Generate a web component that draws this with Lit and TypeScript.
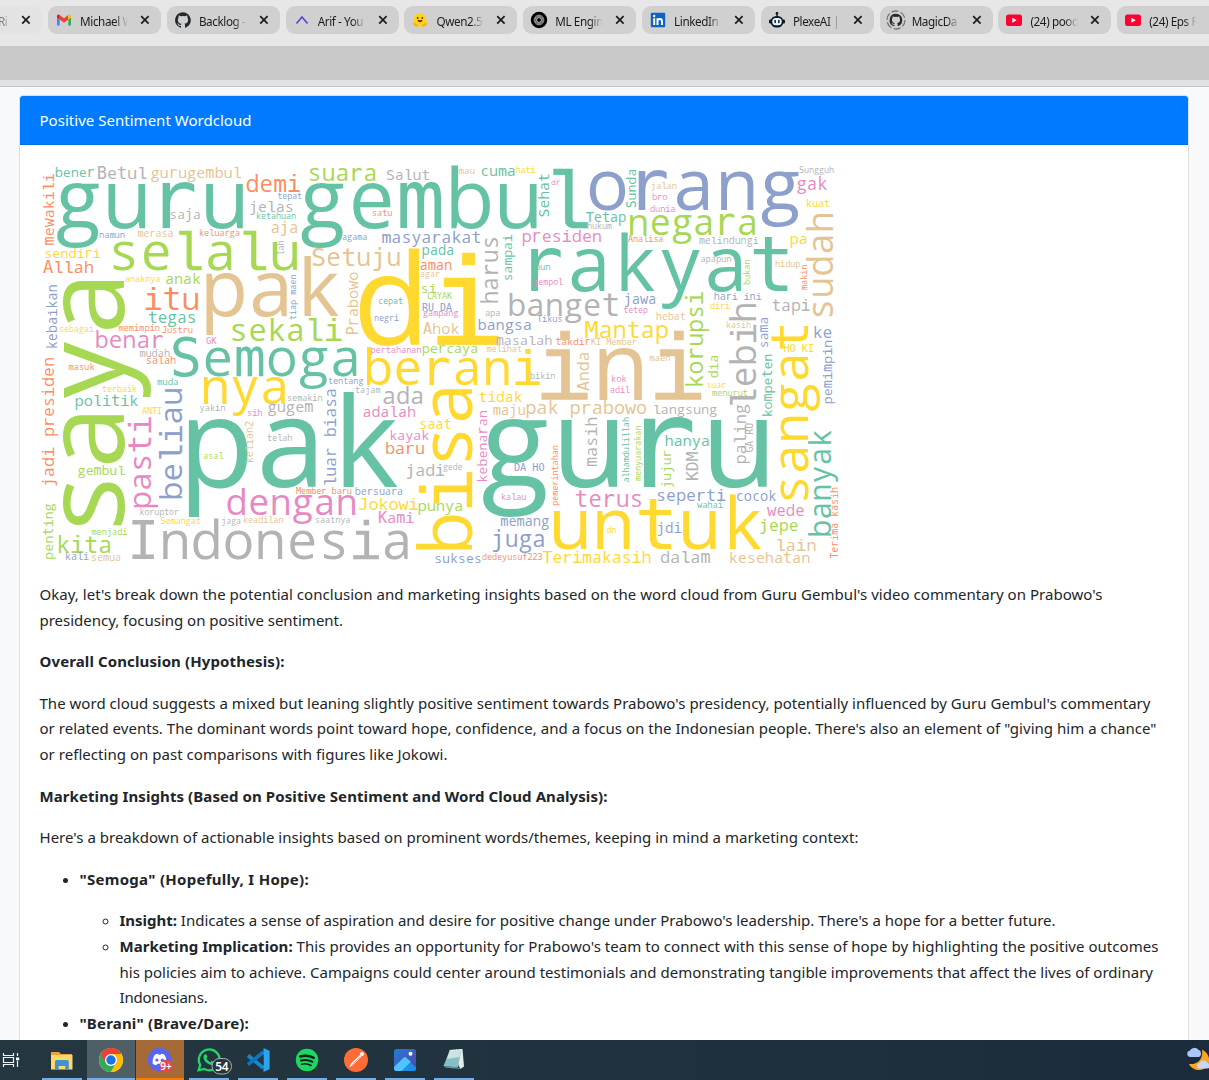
import { LitElement, html, svg, css } from "lit";
import { customElement } from "lit/decorators.js";

const T = "#66c2a5", O = "#fc8d62", B = "#8da0cb", P = "#e78ac3";
const G = "#a6d854", Y = "#ffd92f", N = "#e5c494", A = "#b3b3b3";

// text, start, end, baseline, colour. Upright words run left to right.
type Word = [string, number, number, number, string];

const across: Word[] = [
  ["bener", 55.5, 94, 177, T], ["Betul", 97.7, 146.5, 179, A], ["gurugembul", 151.5, 241, 177.7, N],
  ["guru gembul", 58.5, 587, 227.7, T], ["saja", 170, 200, 219, A], ["namun", 99.5, 124.5, 237.5, B],
  ["merasa", 138, 173, 237.3, N], ["keluarga", 199.5, 239.5, 236, O], ["sendiri", 45, 100, 258, Y],
  ["Allah", 44, 93, 273, O], ["selalu", 111, 298, 270, G], ["anaknya", 125.5, 160, 282, Y],
  ["anak", 166, 200, 284, G], ["itu", 145.5, 198.5, 309.5, O], ["pak", 205, 337.5, 315.7, N],
  ["tegas", 149, 195.5, 322.5, T], ["sebagai", 59.5, 93.5, 331.5, Y], ["memimpin", 119, 159.5, 331, O],
  ["Justru", 162.5, 192.5, 332.5, O], ["benar", 96, 163, 347.5, P], ["GK", 206.5, 216, 343.5, P],
  ["mudah", 140, 169.5, 357, A], ["salah", 146.5, 175.5, 364, O], ["Semoga", 173, 358.5, 375.7, T],
  ["demi", 247, 299.5, 191.5, O], ["tepat", 278, 301.5, 198.5, B], ["suara", 309, 376, 181, G],
  ["Salut", 387, 429.5, 180, A], ["jelas", 250, 293, 212, A], ["ketahuan", 256.5, 295.5, 218.5, T],
  ["satu", 372.5, 392, 215.5, O], ["aja", 271.5, 297.5, 233, N], ["agama", 342.5, 367, 239.7, B],
  ["masyarakat", 382.5, 480.5, 243, B], ["Setuju", 312.5, 400, 265.5, N], ["pada", 422.5, 453.5, 254.7, T],
  ["aman", 420.5, 451.5, 270, O], ["agar", 420.5, 439.5, 276.5, N], ["si", 421.5, 436, 293, G],
  ["LAYAK", 427.5, 451.5, 298.5, G], ["RU DA", 422.5, 451.5, 311, B], ["gampang", 423.5, 458, 316, P],
  ["Ahok", 424, 458.5, 333.5, N], ["di", 361, 497, 344.5, Y], ["cepat", 378.5, 402.5, 303.7, T],
  ["negri", 374.5, 398.5, 320.5, B], ["sekali", 231, 341, 341, G], ["pertahanan", 371, 421, 352.7, P],
  ["percaya", 422.5, 477.5, 353, G], ["berani", 366, 539, 384.5, Y], ["mau", 459, 474.5, 173.5, N],
  ["cuma", 481, 515, 176, T], ["hati", 516, 535, 173, Y], ["dr", 551.5, 560, 184.5, P],
  ["orang", 590, 797.5, 210, B], ["Tetap", 586.5, 625.5, 222.3, T], ["hukum", 587.5, 611.5, 228.5, A],
  ["negara", 629.5, 756.5, 234.5, G], ["presiden", 522.5, 601, 242, P], ["Analisa", 628.5, 663, 242, O],
  ["rakyat", 525.5, 790, 291, T], ["pun", 535.5, 550, 270, T], ["jempol", 534, 562.5, 284.5, P],
  ["banget", 509, 618.5, 315.7, A], ["jawa", 624.5, 655.5, 304, B], ["apa", 485.5, 500, 315.5, A],
  ["tetep", 624, 647.5, 312.5, P], ["Tikus", 537.5, 562, 322, B], ["bangsa", 478.5, 531, 330, B],
  ["Mantap", 586, 667.5, 337.7, Y], ["masalah", 496.5, 551.5, 344.7, A], ["takdir", 556, 590, 345, O],
  ["KI Member", 591.5, 636.5, 345, N], ["melihat", 487, 521.5, 351.5, N], ["ini", 541, 700, 400, N],
  ["Sungguh", 799.5, 833.5, 172.7, A], ["jalan", 651.5, 676.5, 188.7, N], ["gak", 797.5, 826.5, 189.7, P],
  ["bro", 652.5, 667, 200.3, P], ["dunia", 650.5, 675, 211.5, P], ["kuat", 806.5, 829.5, 207, Y],
  ["pa", 790.5, 807, 243.5, Y], ["melindungi", 699.5, 758, 243.7, A], ["apapun", 701, 731, 261.7, A],
  ["hidup", 775.5, 800, 266.5, N], ["hari ini", 714.5, 761, 299.7, B], ["diri", 710.5, 729.5, 308.5, Y],
  ["tapi", 772.5, 809.5, 311.3, A], ["hebat", 656.5, 685, 319.5, N], ["kasih", 726.5, 750.5, 327.5, N],
  ["ke", 813.5, 831.5, 337.7, B], ["HO KI", 784, 813.5, 351.7, Y], ["maen", 650, 670, 360.5, N],
  ["masuk", 69, 94, 369.5, O], ["muda", 157.5, 178, 384.7, T], ["terbaik", 102.5, 136.5, 391.5, Y],
  ["politik", 75.5, 137.5, 406, T], ["ANTI", 142.5, 161.5, 413.5, Y], ["nya", 203, 287, 404, Y],
  ["yakin", 200, 225, 410.5, A], ["gembul", 78.5, 124.5, 475, G], ["asal", 203.5, 223, 458.5, G],
  ["pak guru", 186.5, 769, 487, T], ["koruptor", 140, 178.5, 514.7, A], ["Semangat", 161, 200.5, 524, Y],
  ["jaga", 222, 240.5, 524, A], ["menjadi", 92, 127, 534.7, G], ["Indonesia", 130.5, 410, 558.5, A],
  ["kita", 57.5, 111, 552.5, G], ["kali", 65.5, 88.5, 560.3, B], ["semua", 91.5, 120.5, 560.7, N],
  ["tentang", 328.5, 363, 383.7, B], ["tajam", 355.5, 380, 393, A], ["ada", 383.5, 423, 403.5, A],
  ["semakin", 287.5, 322, 400.5, A], ["gugem", 268.5, 312.5, 411.7, A], ["sih", 247.5, 262, 416, P],
  ["adalah", 363.5, 415, 416.7, P], ["saat", 420, 451, 428.5, Y], ["kayak", 390, 428.5, 440, P],
  ["baru", 386, 424, 453.7, O], ["telah", 267.5, 292, 440.7, A], ["jadi", 406.5, 444, 475.5, A],
  ["Member baru", 296.5, 351.5, 493.7, O], ["bersuara", 355.5, 402.5, 494.7, B], ["dengan", 228, 355.5, 515, P],
  ["Jokowi", 359.5, 417.5, 509.7, Y], ["punya", 418.5, 462.5, 511, G], ["keadilan", 243.5, 283, 523, N],
  ["saatnya", 315.5, 350, 523, A], ["Kami", 379, 413.5, 522.7, P], ["sukses", 435, 481, 562.5, B],
  ["bikin", 530.5, 555, 378.7, A], ["kok", 611.5, 626, 381.7, P], ["adil", 610.5, 629.5, 392.7, P],
  ["tidak", 479.5, 521.5, 401.5, Y], ["maju", 493.5, 525, 414.5, N], ["pak prabowo", 526.5, 646, 414, N],
  ["gede", 443.5, 462, 469.5, A], ["DA HO", 514.5, 544, 470.7, B], ["kalau", 501.5, 526, 499.7, P],
  ["terus", 576, 642, 506.5, P], ["memang", 501, 548.5, 526, B], ["juga", 492.5, 544.5, 546.5, B],
  ["untuk", 553, 760, 548.5, Y], ["dn", 607, 616, 532.7, Y], ["dedeyusuf223", 482.5, 542, 559.7, O],
  ["Terimakasih", 543.5, 650.5, 563, Y], ["luar", 707, 725.5, 387.5, Y], ["menurut", 712.5, 747.5, 395.7, G],
  ["langsung", 653.5, 716.5, 413.5, A], ["hanya", 665.5, 709, 446, T], ["seperti", 657, 725, 500.7, B],
  ["cocok", 736.5, 775.5, 500.5, B], ["wahai", 697.5, 722.5, 507.7, T], ["wede", 768, 803.5, 516, P],
  ["jepe", 760, 797.5, 531.3, G], ["jdi", 657.5, 681, 532.5, B], ["lain", 776.5, 815.5, 550.7, N],
  ["dalam", 661, 709.5, 563, A], ["kesehatan", 729.5, 809.5, 562.5, N],
];

// Turned words run bottom to top; the baseline is an x coordinate.
const upward: Word[] = [
  ["mewakili", 244.5, 174, 54, O], ["kebaikan", 348.5, 285, 57, B], ["saya", 531, 276, 124, G],
  ["lah", 255, 241, 284, A], ["tiap maen", 319.5, 275, 296.3, B], ["Prabowo", 334.5, 272.5, 357.5, N],
  ["Sehat", 216.5, 174, 549, T], ["Sunda", 207.5, 169.5, 635.5, T], ["harus", 303, 237, 497.5, A],
  ["sampai", 280.5, 235, 511.5, T], ["Anda", 390, 352.5, 589, N], ["sudah", 318, 213.5, 832.5, N],
  ["bukan", 284.5, 260, 750, G], ["makin", 289.5, 265, 807, O], ["korupsi", 387, 292.5, 702.5, G],
  ["lebih", 407, 303.5, 755.7, A], ["sama", 347.5, 317.5, 767.7, B], ["sangat", 502, 324, 807.7, Y],
  ["pemimpin", 403.5, 340.5, 832, B], ["dia", 377.5, 355.5, 717.5, G], ["kompeten", 416.5, 354.5, 771.5, T],
  ["jadi presiden", 486, 358, 54, O], ["beliau", 499, 388.5, 181.7, B], ["pasti", 508, 417.5, 150.7, P],
  ["penting", 559, 504, 52.5, G], ["luar biasa", 485.5, 389, 336, B], ["kelian2", 462.5, 421.5, 252.7, N],
  ["bisa", 551, 386, 471.7, Y], ["kebenaran", 482, 411, 486.7, P], ["masih", 466, 417.5, 596.5, A],
  ["pemerintahan", 505.5, 445.5, 557.5, O], ["alhamdulillah", 482, 417.5, 628.7, T],
  ["menyuarakan", 480.5, 426, 640.5, G], ["paling", 463.5, 405, 746, A], ["GA RU", 452, 423.5, 752.7, A],
  ["jujur", 487.5, 450.5, 671, G], ["KDM", 480, 452.5, 697.5, A], ["banyak", 536, 431, 830.7, T],
  ["Terima kasih", 558, 487.5, 837.5, O],
];

const CELL = 0.6;
const faceOf = (c: string) => (c === "l" || c === "i" ? "slab" : "abcdeghknopqsuvxyz".includes(c) ? "round" : "mono");

// Neighbouring glyphs of one face share a run.
function runs(text: string): [string, string][] {
  const out: [string, string][] = [];
  for (const c of text) {
    const face = faceOf(c);
    const last = out[out.length - 1];
    if (last && last[0] === face) last[1] += c;
    else out.push([face, c]);
  }
  return out;
}

// Each glyph is centred in a fixed-width cell.
function drawWord([text, from, to, base, fill]: Word, turned: boolean) {
  const n = text.length;
  const size = Math.abs(to - from) / (CELL * n - 0.12);
  const xs = [...text].map((c, i) => (((i + 0.5) * CELL - 0.06 - (c === "r" ? 0.04 : 0)) * size).toFixed(2)).join(" ");
  const place = turned ? `translate(${base} ${from}) rotate(-90)` : `translate(${from} ${base})`;
  const glyphs = runs(text).map(([face, part]) => svg`<tspan class=${face}>${part}</tspan>`);
  return svg`<text transform=${place} x=${xs} y="0" font-size=${size.toFixed(2)} fill=${fill} stroke=${fill}>${glyphs}</text>`;
}

@customElement("word-cloud")
export class WordCloud extends LitElement {
  static styles = css`
    :host { display: block; width: 800px; height: 400px; }
    svg { display: block; overflow: visible; }
    text { text-anchor: middle; white-space: pre; stroke-width: 0; }
    .mono { font-family: "DejaVu Sans Mono", monospace; }
    .round { font-family: "Open Sans", sans-serif; }
    .slab { font-family: "Liberation Mono", monospace; stroke-width: 0.005em; }
  `;
  render() {
    return html`<svg width="800" height="400" viewBox="40 165 800 400">
      ${across.map((w) => drawWord(w, false))}${upward.map((w) => drawWord(w, true))}
    </svg>`;
  }
}

const cat = svg`<path fill="#24292f" d="M8 .2a8 8 0 0 0-2.5 15.6c.4.1.5-.2.5-.4v-1.5c-2.2.5-2.7-.9-2.7-.9-.4-.9-.9-1.2-.9-1.2-.7-.5.1-.5.1-.5.8.1 1.2.8 1.2.8.7 1.2 1.9.9 2.3.7.1-.5.3-.9.5-1.1-1.8-.2-3.6-.9-3.6-4 0-.9.3-1.6.8-2.1-.1-.2-.4-1 .1-2.1 0 0 .7-.2 2.2.8a7.500 7.500 0 0 1 4 0c1.500-1 2.200-.8 2.200-.8.4 1.100.2 1.900.1 2.100.5.6.8 1.300.8 2.100 0 3.100-1.900 3.700-3.700 3.900.3.300.6.800.6 1.500v2.200c0 .2.100.5.600.4A8 8 0 0 0 8 .2z"/>`;

const icons: Record<string, unknown> = {
  gmail: svg`<path fill="#4285f4" d="M1 13.500h2.700V7.500L1 5.500z"/><path fill="#34a853" d="M12.300 13.500H15v-8l-2.700 2z"/><path fill="#ea4335" d="M3.700 7.500V3L8 6.200 12.300 3v4.500L8 10.700z"/><path fill="#c5221f" d="M1 4v1.500l2.700 2V3C2.500 2 1 2.500 1 4z"/><path fill="#fbbc04" d="M15 4v1.500l-2.700 2V3C13.500 2 15 2.500 15 4z"/>`,
  github: cat,
  arif: svg`<path fill="none" stroke="#4d49c8" stroke-width="1.600" d="M2.500 11.500 8 5l5.500 6.500"/>`,
  hugging: svg`<path fill="#ffd21e" d="M8 1.200c3.700 0 6.200 2.800 6.200 6.200 0 1.500.9 2.600.7 4.200-.2 1.700-1.900 2.800-4.400 2.800h-5C3 14.400 1.300 13.300 1.100 11.600c-.2-1.600.7-2.700.7-4.200C1.800 4 4.300 1.200 8 1.200z"/><path fill="#ffb000" d="M1.200 11c2-.5 4 1 5 3.400H5C3 14.400 1 13.300 1.200 11zM14.800 11c-2-.5-4 1-5 3.400H11c2 0 4-1.100 3.800-3.400z"/><circle cx="5.700" cy="6" r=".9" fill="#4a3b16"/><circle cx="10.300" cy="6" r=".9" fill="#4a3b16"/><path fill="#6b3a16" d="M5.500 8h5c-.3 3-4.700 3-5 0z"/>`,
  openai: svg`<circle cx="8" cy="8" r="8.200" fill="#000"/><g fill="none" stroke="#ddd" stroke-width=".6"><rect x="3.800" y="5.800" width="8.400" height="4.400" rx="2.200"/><rect x="3.800" y="5.800" width="8.400" height="4.400" rx="2.200" transform="rotate(60 8 8)"/><rect x="3.800" y="5.800" width="8.400" height="4.400" rx="2.200" transform="rotate(120 8 8)"/><circle cx="8" cy="8" r="4.900"/></g>`,
  linkedin: svg`<rect x=".8" y=".8" width="14.400" height="14.400" rx="1" fill="#0a66c2"/><path stroke="#fff" stroke-width="2" fill="none" d="M4.200 6.300V13M7.500 6.300V13M7.500 9.500c0-3.200 4.500-3.200 4.500 0V13"/><circle cx="4.200" cy="4" r="1.200" fill="#fff"/>`,
  robot: svg`<path stroke="#0b1a2b" stroke-width="1.500" d="M8 0v4"/><circle cx="8" cy="1.300" r="1.300" fill="#0b1a2b"/><rect x="0" y="7.500" width="3" height="4" rx="1.200" fill="#0b1a2b"/><rect x="13" y="7.500" width="3" height="4" rx="1.200" fill="#0b1a2b"/><rect x="1.700" y="4" width="12.600" height="11.500" rx="5.500" fill="#0b1a2b"/><rect x="3.300" y="6" width="9.400" height="7.300" rx="3.500" fill="#e8f6ff"/><rect x="5.400" y="7.700" width="1.500" height="3.500" rx=".7" fill="#0b1a2b"/><rect x="9.100" y="7.700" width="1.500" height="3.500" rx=".7" fill="#0b1a2b"/>`,
  ring: svg`<g transform="translate(1.600 1.600) scale(.8)">${cat}</g><circle cx="8" cy="8" r="9" fill="none" stroke="#777" stroke-width="1.300" stroke-dasharray="7 2.400"/>`,
  youtube: svg`<rect x="0" y="2.500" width="16" height="11.500" rx="2.500" fill="#ff0033"/><path fill="#fff" d="M6.300 5.700v5L10.700 8.200z"/>`,
};

const tabs: [string, string][] = [
  ["gmail", "Michael W"], ["github", "Backlog -"], ["arif", "Arif - You"], ["hugging", "Qwen2.5"],
  ["openai", "ML Engin"], ["linkedin", "LinkedIn"], ["robot", "PlexeAI | "], ["ring", "MagicDa"],
  ["youtube", "(24) pood"], ["youtube", "(24) Eps F"],
];

const cross = html`<svg class="x" width="10" height="10" viewBox="0 0 10 10"><path d="M1.200 1.200l7.400 7.400M8.600 1.200L1.200 8.600" stroke="#1b1b1b" stroke-width="1.700" fill="none"/></svg>`;

@customElement("tab-strip")
export class TabStrip extends LitElement {
  static styles = css`
    :host { display: block; width: 100%; height: 87px; overflow: hidden; font-family: "Noto Sans", sans-serif; }
    .tabs { display: flex; gap: 5.8px; height: 40px; padding-top: 6px; background: #e7e7e7; }
    .tab { box-sizing: border-box; flex: 0 0 113px; height: 28px; border-radius: 9px; background: #d0d0d0; display: flex; align-items: center; padding-left: 8px; }
    .first { flex-basis: 42.300px; background: #e3e3e3; border-radius: 0 9px 9px 0; padding-left: 0; }
    .icon { overflow: visible; flex: none; }
    .label { width: 48px; margin-left: 8px; padding-top: 1px; overflow: hidden; white-space: nowrap; font-size: 11.700px; line-height: 18px; letter-spacing: -0.4px; color: #1b1b1b; -webkit-mask-image: linear-gradient(90deg, #000 72%, transparent 100%); }
    .first .label { width: 10px; margin-left: -2px; opacity: .5; }
    .x { flex: none; margin-left: 12px; }
    .first .x { margin-left: 13px; }
    .band { height: 34px; background: #c8c8c9; }
    .edge { height: 6px; background: #e1e2e3; border-bottom: 1px solid #c4c6c8; }
  `;
  render() {
    return html`<div class="tabs">
        <div class="tab first"><span class="label">Ri</span>${cross}</div>
        ${tabs.map(([icon, label]) => html`<div class="tab">
          <svg class="icon" width="16" height="16" viewBox="0 0 16 16">${icons[icon]}</svg>
          <span class="label">${label}</span>${cross}
        </div>`)}
      </div>
      <div class="band"></div><div class="edge"></div>`;
  }
}

const apps: [string, unknown][] = [
  ["", svg`<path fill="#e8a33d" d="M1 4h8l2 2h11v4H1z"/><path fill="#ffd868" d="M1 7h21.500v14.500H1z"/><path fill="#3f93d2" d="M5 13.500q0-1.500 1.500-1.500h10.800q1.500 0 1.500 1.500V22h-3.500v-4h-6.600v4H5z"/>`],
  ["active", svg`<circle cx="12" cy="12" r="12" fill="#fff"/><path fill="#ea4335" d="M12 12 1.600 6A12 12 0 0 1 22.400 6z"/><path fill="#34a853" d="M12 12 1.600 6A12 12 0 0 0 12 24l5.200-9z"/><path fill="#fbbc04" d="M12 6h10.400A12 12 0 0 1 12 24l5.200-9z"/><path fill="#ea4335" d="M1.600 6A12 12 0 0 1 22.400 6H12l-5 9z"/><circle cx="12" cy="12" r="6" fill="#fff"/><circle cx="12" cy="12" r="4.700" fill="#1a73e8"/>`],
  ["alert", svg`<circle cx="11.500" cy="11.500" r="11.700" fill="#5865f2"/><path fill="#fff" d="M7 6.500 10 5.700l.6 1h2l.6-1 3 .8c2 3 2.800 6 2.500 9.200-1 .8-2.300 1.300-3.700 1.600l-.8-1.500h-5l-.8 1.500c-1.400-.3-2.700-.8-3.700-1.600C4.300 12.500 5 9.500 7 6.500z"/><circle cx="8.900" cy="12" r="1.600" fill="#5865f2"/><circle cx="14.300" cy="12" r="1.600" fill="#5865f2"/><circle cx="18" cy="18" r="6.500" fill="#e5484d"/><text x="18" y="21.700" class="note">9+</text>`],
  ["", svg`<path fill="none" stroke="#25d366" stroke-width="2.300" d="M1.600 22.300 3.200 17A10.400 10.400 0 1 1 7.300 21z"/><path fill="#25d366" d="M8.200 6.300c.8-.3 1.200 0 1.500.8l.7 1.700c.1.600-.7 1.200-1 1.700 1 1.900 2.300 3 4.100 3.700l1.300-1.400 2.600 1.200c.2 1.800-1.400 3-3.200 2.900C10.500 16.600 6.700 13 6.400 9.300c0-1.500.9-2.600 1.800-3z"/><rect x="15" y="10.500" width="19.500" height="15.500" rx="7.700" fill="#26343b" stroke="#a9b0b3" stroke-width="1"/><text x="24.700" y="22.500" class="count">54</text>`],
  ["", svg`<path fill="none" stroke="#1688d2" stroke-width="3.800" stroke-linejoin="round" d="M17.500 20 2 7.600"/><path fill="none" stroke="#0f75bd" stroke-width="3.800" d="M17.500 4 2 16.600"/><path fill="#2aa5ef" d="M17.500 0 23.600 2.700v18.600L17.500 24z"/><path fill="#24353e" d="M17.500 7v10l-6-5z"/>`],
  ["", svg`<circle cx="12" cy="12" r="11.200" fill="#1ed760"/><g fill="none" stroke="#10251a" stroke-linecap="round"><path stroke-width="2.400" d="M5.200 8.500c4.500-1.300 9.500-.9 13.600 1.400"/><path stroke-width="2" d="M6 12.500c4-1.100 8-.7 11.500 1.300"/><path stroke-width="1.700" d="M6.600 16.200c3.300-.9 6.500-.5 9.500 1.200"/></g>`],
  ["", svg`<circle cx="12" cy="12" r="12" fill="#ff6c37"/><path fill="#fff" d="m5 19.500 2-4 9-8.500 1.400 1.400L9 17z"/><circle cx="17.900" cy="6.100" r="2" fill="#fff"/><path stroke="#ff6c37" stroke-width=".6" d="m8 17 8-8"/>`],
  ["", svg`<defs><linearGradient id="sky" x1="0" y1="0" x2="1" y2="1"><stop stop-color="#1f7fd8"/><stop offset="1" stop-color="#5a3fa8"/></linearGradient></defs><rect x="1" y="1" width="22" height="22" rx="2.500" fill="url(#sky)"/><path fill="#4fc3fb" d="M1 19 10.500 9.700q1.500-1.500 3 0L18 14 9 23H3.500Q1 23 1 20.500z"/><path fill="#1c8fe8" d="m9 23 7-7.300q1.500-1.500 3 0L23 19.500v1q0 2.500-2.500 2.500z"/><circle cx="17.500" cy="5.700" r="2" fill="#fff"/>`],
  ["", svg`<path fill="#e3eceb" d="M8 2 20.500 1 22 18.500l-3.500 2.500z"/><path fill="#86bfc3" d="M7.500 3 19 2.500 16 19.500 1.500 18z"/><path fill="#c9e4e4" d="M7.500 3 19 2.500 17.500 9 4.800 11z"/><path fill="#5a9aa2" d="m1.500 18 14.500 1.500 3 1.500L4 19.800z"/><path stroke="#f4f7f7" stroke-width="1.200" stroke-dasharray="1 1.200" d="M7.500 2.500 20 1.500"/>`],
];

@customElement("task-bar")
export class TaskBar extends LitElement {
  static styles = css`
    :host { display: flex; width: 100%; height: 40px; background: linear-gradient(90deg, #24363f, #20323d 45%, #1c2b3c); overflow: hidden; }
    .view { width: 38px; padding-top: 12px; box-sizing: border-box; }
    .apps { display: flex; gap: 1px; flex: 1; }
    .app { width: 48px; height: 40px; box-sizing: border-box; display: flex; flex-direction: column; align-items: center; padding-top: 8px; justify-content: space-between; }
    .app svg { overflow: visible; }
    .line { width: 40px; height: 2px; background: #76aee3; }
    .active { background: #4f5f68; }
    .active .line { width: 48px; }
    .alert { background: #a56a35; }
    .alert .line { width: 48px; background: #f57c00; }
    .note, .count { font-family: "Noto Sans", sans-serif; font-weight: 600; fill: #fff; text-anchor: middle; }
    .note { font-size: 10px; }
    .count { font-size: 12px; letter-spacing: -0.3px; }
    .weather { width: 23px; padding-top: 7px; }
  `;
  render() {
    return html`<div class="view"><svg width="20" height="17" viewBox="0 0 20 17"><g fill="none" stroke="#f0f2f3" stroke-width="1.200"><path d="M3.500 1v2.500h10V1M3.500 15v-2.500h10V15M3.500 5.500h10v5h-10zM17.500 1v3M17.500 9v6"/></g><path fill="#fff" d="M16 5.500h3.200v2.800H16z"/></svg></div>
      <div class="apps">${apps.map(([state, art]) => html`<div class="app ${state}">
        <svg width="24" height="24" viewBox="0 0 24 24">${art}</svg><div class="line"></div></div>`)}</div>
      <div class="weather"><svg width="28" height="26" viewBox="0 0 28 26"><path fill="#f9a825" d="M16 2.500c7 3.500 9 11 5.500 16.500-4.500 6-14.500 5.500-18.500-2 9 1 14.500-5.500 13-14.500z"/><path fill="#a9c8f5" d="M4 10a3.300 3.300 0 0 1 0-6.500 5 5 0 0 1 8.500-.5c3 0 3.500 6 .5 7z"/><path fill="#c3d8f8" d="M13 21.500a2.800 2.800 0 0 1 .5-5.500 4.500 4.500 0 0 1 8 0c4 .5 3.500 5.500 0 5.500z"/></svg></div>`;
  }
}

@customElement("app-root")
export class AppRoot extends LitElement {
  static styles = css`
    :host { display: flex; flex-direction: column; height: 1080px; overflow: hidden; background: #f8f9fa; font-family: "Noto Sans", sans-serif; color: #212529; }
    main { flex: 1; min-height: 0; overflow: hidden; padding: 8px 20px 0 19px; }
    .card { background: #fff; border: 1px solid #dfdfdf; border-radius: 4px; height: 1100px; }
    .head { box-sizing: border-box; height: 49px; padding: 12px 20px 0 19.500px; background: #007bff; border-bottom: 1px solid #006fe0; border-radius: 3px 3px 0 0; color: #fff; font-size: 15px; line-height: 25.6px; }
    .body { padding: 20px 20px 0 19.500px; font-size: 15px; line-height: 25.6px; }
    word-cloud { margin: 0 0 17px 0.5px; }
    p { margin: 0 0 16px; }
    ul { margin: 0; padding-left: 40px; }
    .line { display: block; width: max-content; white-space: nowrap; }
    b { font-weight: 700; }
  `;

  private line(width: number, content: unknown) {
    return html`<span class="line" data-width=${width}>${content}</span>`;
  }

  // Tracks every line so that it runs to its measure.
  firstUpdated() {
    this.renderRoot.querySelectorAll<HTMLElement>(".line").forEach((el) => {
      const chars = (el.textContent ?? "").length;
      const gap = (Number(el.dataset.width) - el.getBoundingClientRect().width) / chars;
      el.style.letterSpacing = `${gap.toFixed(4)}px`;
    });
  }

  render() {
    const l = this.line;
    return html`<tab-strip></tab-strip>
      <main><section class="card">
        <div class="head">${l(212, "Positive Sentiment Wordcloud")}</div>
        <div class="body">
          <word-cloud></word-cloud>
          <p>${l(1063, "Okay, let's break down the potential conclusion and marketing insights based on the word cloud from Guru Gembul's video commentary on Prabowo's")}
          ${l(303.5, "presidency, focusing on positive sentiment.")}</p>
          <p>${l(245, html`<b>Overall Conclusion (Hypothesis):</b>`)}</p>
          <p>${l(1111, "The word cloud suggests a mixed but leaning slightly positive sentiment towards Prabowo's presidency, potentially influenced by Guru Gembul's commentary")}
          ${l(1117, "or related events. The dominant words point toward hope, confidence, and a focus on the Indonesian people. There's also an element of \"giving him a chance\"")}
          ${l(408, "or reflecting on past comparisons with figures like Jokowi.")}</p>
          <p>${l(568, html`<b>Marketing Insights (Based on Positive Sentiment and Word Cloud Analysis):</b>`)}</p>
          <p>${l(819, "Here's a breakdown of actionable insights based on prominent words/themes, keeping in mind a marketing context:")}</p>
          <ul>
            <li><p>${l(229.5, html`<b>"Semoga" (Hopefully, I Hope):</b>`)}</p>
              <ul>
                <li>${l(936, html`<b>Insight:</b> Indicates a sense of aspiration and desire for positive change under Prabowo's leadership. There's a hope for a better future.`)}</li>
                <li>${l(1039, html`<b>Marketing Implication:</b> This provides an opportunity for Prabowo's team to connect with this sense of hope by highlighting the positive outcomes`)}
                ${l(1033.5, "his policies aim to achieve. Campaigns could center around testimonials and demonstrating tangible improvements that affect the lives of ordinary")}
                ${l(88, "Indonesians.")}</li>
              </ul>
            </li>
            <li><p>${l(169.5, html`<b>"Berani" (Brave/Dare):</b>`)}</p></li>
          </ul>
        </div>
      </section></main>
      <task-bar></task-bar>`;
  }
}
